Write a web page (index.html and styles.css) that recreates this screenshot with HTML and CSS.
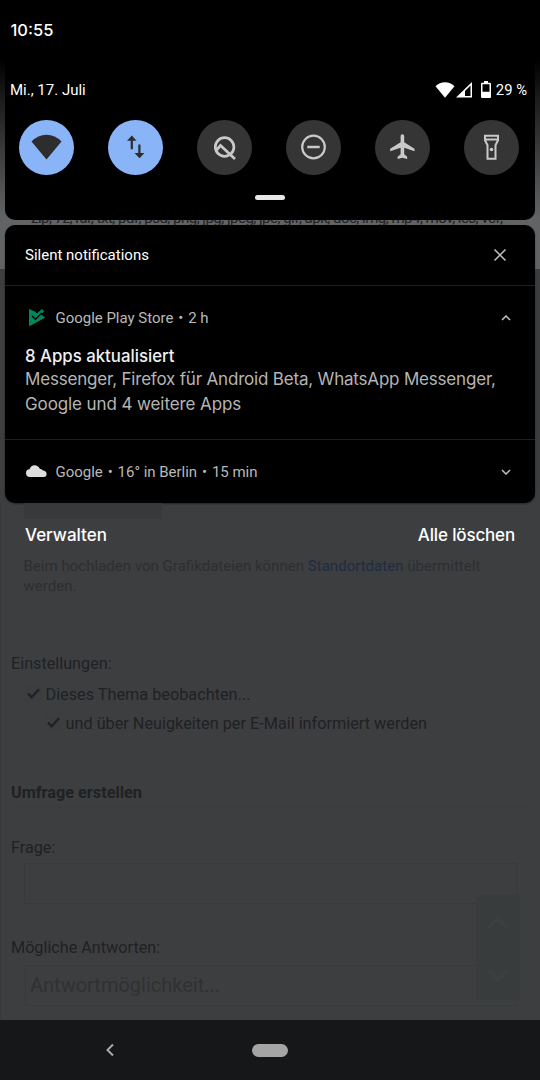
FILE: index.html
```html
<!DOCTYPE html>
<html lang="de">
<head>
<meta charset="utf-8">
<title>Benachrichtigungen</title>
<link rel="stylesheet" href="styles.css">
</head>
<body>
<div class="screen">
  <header class="quick-panel">
    <div class="clock"><span>10:55</span></div>
    <div class="status-row">
      <span class="date">Mi., 17. Juli</span>
      <div class="status-icons">
        <svg class="s-wifi" width="20" height="16" viewBox="0 0 20 16"><path d="M.5 4.300Q4.500.3 10 .3t9.500 4L10 15.700z" fill="#fff"/></svg>
        <svg class="s-cell" width="17" height="16" viewBox="0 0 17 16"><path fill-rule="evenodd" d="M16 0v15.500H0zM14.500 3.500L9 9v5h5.500z" fill="#fff"/></svg>
        <svg class="s-batt" width="10" height="17" viewBox="0 0 10 17"><path fill-rule="evenodd" d="M3 0h4v1.700h2q1 0 1 1V16q0 1-1 1H1q-1 0-1-1V2.700q0-1 1-1h2zM1.500 3.300v7.400h7V3.300z" fill="#fff"/></svg>
        <span class="percent">29 %</span>
      </div>
    </div>
    <div class="tiles">
      <div class="tile on"><svg viewBox="0 0 55 55"><path d="M12.500 21.500Q19 14.700 27.500 14.700T42.500 21.500L27.500 39.500z" fill="#2d2d2d"/></svg></div>
      <div class="tile on"><svg viewBox="0 0 55 55"><path d="M19 20.800l4.800-5.200 4.800 5.200h-3.700v8.500h-2.200v-8.500zM26.500 33h3.800v-8.500h2.200V33h3.900l-4.900 5.200z" fill="#2d2d2d"/></svg></div>
      <div class="tile"><svg viewBox="0 0 55 55" fill="none" stroke="#c9c9c9" stroke-width="2.700"><circle cx="27.600" cy="27" r="9.300"/><path d="M19.500 30l4-4.500L38 39"/></svg></div>
      <div class="tile"><svg viewBox="0 0 55 55" fill="none" stroke="#c9c9c9" stroke-width="2.200"><circle cx="27.500" cy="27" r="11.300"/><path d="M21.300 27h12.400" stroke-width="2.500"/></svg></div>
      <div class="tile"><svg viewBox="0 0 55 55"><path d="M39.500 31.200v-2.400L29.200 22.200V16q0-1.800-1.800-1.800T25.600 16v6.200L15.200 28.800v2.400l10.400-3.400v6.500l-3 2.500V39l4.800-1.300L32.200 39v-2.200l-3-2.500v-6.500z" fill="#c9c9c9"/></svg></div>
      <div class="tile"><svg viewBox="0 0 55 55" fill="none" stroke="#c9c9c9" stroke-width="2"><path d="M21 15.800h13v4.500l-2.500 5v13.500h-8V25.300l-2.500-5zM21 19.500h13"/><circle cx="27.500" cy="29.500" r="1.800" fill="#c9c9c9" stroke="none"/></svg></div>
    </div>
    <div class="handle"></div>
  </header>

  <div class="peek">zip, 7z, rar, txt, pdf, psd, png, jpg, jpeg, jpe, gif, apk, doc, img, mp4, mov, ics, vcf,</div>

  <main class="notifications">
    <div class="section-head">
      <span>Silent notifications</span>
      <svg width="14" height="14" viewBox="0 0 14 14"><path d="M1.500 1.500l11 11m0-11l-11 11" stroke="#bdc1c6" stroke-width="1.500"/></svg>
    </div>
    <article class="note expanded">
      <div class="note-head">
        <svg class="app-icon" width="22" height="20" viewBox="0 0 22 20"><path d="M4.500 1.500l6 3L12 6l5-4.500L18.700 3 15.500 6.500l4 3L4.500 17.700z" fill="#01875f" stroke="#01875f" stroke-width="1" stroke-linejoin="round"/><path d="M7 8l3.500 3.300L16.800 5" fill="none" stroke="#000" stroke-width="1.500"/></svg>
        <span class="source">Google Play Store<i>•</i>2 h</span>
        <svg class="chev" width="10" height="6" viewBox="0 0 10 6"><path d="M1 5l4-4 4 4" fill="none" stroke="#c4c4c4" stroke-width="1.500"/></svg>
      </div>
      <h2><span>8 Apps aktualisiert</span></h2>
      <p><span class="l1">Messenger, Firefox für Android Beta, WhatsApp Messenger,</span><br><span class="l2">Google und 4 weitere Apps</span></p>
    </article>
    <article class="note">
      <div class="note-head">
        <svg class="app-icon" width="22" height="20" viewBox="0 0 22 20"><path d="M5 15q-4-.2-4-4 0-3.500 3.500-3.800Q6 3.300 9.500 3.300T15 7q1.500-.2 2.600 1.200Q21.500 8.700 21.600 12T18 15z" fill="#dedede"/></svg>
        <span class="source">Google<i>•</i>16° in Berlin<i>•</i>15 min</span>
        <svg class="chev" width="10" height="6" viewBox="0 0 10 6"><path d="M1 1l4 4 4-4" fill="none" stroke="#c4c4c4" stroke-width="1.500"/></svg>
      </div>
    </article>
  </main>

  <section class="page">
    <div class="upload-box"></div>
    <div class="actions"><span class="manage">Verwalten</span><span class="clear">Alle löschen</span></div>
    <p class="hint">Beim hochladen von Grafikdateien können <a>Standortdaten</a> übermittelt<br>werden.</p>
    <div class="label settings">Einstellungen:</div>
    <div class="check"><svg width="17" height="17" viewBox="0 0 17 17"><path d="M3 8.500l3.600 3.700L14 4.300" fill="none" stroke="#202123" stroke-width="2.400"/></svg><span>Dieses Thema beobachten...</span></div>
    <div class="check nested"><svg width="17" height="17" viewBox="0 0 17 17"><path d="M3 8.500l3.600 3.700L14 4.300" fill="none" stroke="#202123" stroke-width="2.400"/></svg><span>und über Neuigkeiten per E-Mail informiert werden</span></div>
    <h3>Umfrage erstellen</h3>
    <div class="label question">Frage:</div>
    <div class="field"></div>
    <div class="label answers">Mögliche Antworten:</div>
    <div class="field answer">Antwortmöglichkeit...</div>
    <div class="scroller">
      <svg width="44" height="105" viewBox="0 0 44 105" fill="none" stroke="#3d3e40" stroke-width="4"><path d="M12.500 33L22 23.500 31.500 33M12.500 75l9.500 9.500 9.500-9.500"/></svg>
    </div>
  </section>

  <nav class="navbar">
    <svg width="8" height="14" viewBox="0 0 8 14"><path d="M7 1.500L1.500 7 7 12.500" fill="none" stroke="#a9a9a9" stroke-width="2"/></svg>
    <div class="home"></div>
    <div></div>
  </nav>
</div>
</body>
</html>
```
FILE: styles.css
```css
* { box-sizing: border-box; margin: 0; padding: 0; }
body { background: #000; font-family: Roboto, sans-serif; color: #fff; }
svg { display: block; flex: none; }
.screen {
  width: 540px; height: 1080px; overflow: hidden;
  display: flex; flex-direction: column;
  background: linear-gradient(#000 0, #000 60px, #1c1c1d 100px, #404142 160px, #626365 218px, #626365 269px, #3d3e40 269px);
}
.quick-panel { height: 220px; margin: 0 5px; background: #000; border-radius: 0 0 10px 10px; flex: none; }
.clock { height: 79px; padding: 18px 5px 0 5.500px; font: 500 16.500px/24px Inter, sans-serif; }
.status-row { display: flex; justify-content: space-between; height: 21px; padding: 0 8px 0 5px; align-items: center; font-size: 15px; }
.status-icons { display: flex; align-items: center; }
.s-cell { margin-left: 1px; }
.s-batt { margin-left: 8px; }
.percent { margin-left: 5px; font-size: 14.800px; }
.tiles { display: flex; justify-content: space-between; padding: 20px 16px 0 14px; }
.tile { width: 55px; height: 55px; border-radius: 50%; background: #353535; }
.tile.on { background: #8ab4f8; }
.handle { width: 30px; height: 5px; border-radius: 3px; background: #e8e8e8; margin: 20px auto 0; }
.peek { height: 5px; flex: none; overflow: hidden; padding-left: 31px; color: #202123; font-size: 15px; letter-spacing: -.5px; line-height: 14px; white-space: nowrap; display: flex; align-items: flex-end; }
.notifications { height: 278px; flex: none; margin: 0 5px; background: #000; border-radius: 10px; box-shadow: 0 1px 2px #0006; }
.section-head { height: 60px; display: flex; align-items: center; justify-content: space-between; padding: 0 28px 0 20px; font-size: 15px; }
.note { border-top: 1px solid #202020; height: 63px; }
.note.expanded { height: 154px; }
.note-head { height: 64px; display: flex; align-items: center; padding: 0 24px 0 20px; color: #b9b9b9; }
.source { margin-left: 8.500px; font-size: 15px; letter-spacing: -.02px; flex: 1; }
.source i { font-style: normal; margin: 0 4.900px; display: inline-block; }
.note h2 { font: 500 16.800px/24px Inter, sans-serif; padding-left: 20px; margin-top: -6px; color: #f1f1f1; }
.note p { font: 400 17px/25px Inter, sans-serif; padding-left: 20px; margin-top: -1px; color: #b5b5b5; white-space: nowrap; }
.l1 { letter-spacing: -.19px; }
.l2 { letter-spacing: -.1px; }
.page { position: relative; height: 517px; flex: none; color: #202123; border-left: 1px solid #38393b; }
.upload-box { width: 138px; height: 16px; margin-left: 23px; background: #38393b; }
.actions { height: 31px; display: flex; align-items: center; justify-content: space-between; padding: 0 25px 0 24px; color: #fff; font: 500 17px/24px Inter, sans-serif; }
.clear { letter-spacing: -.16px; }
.hint { margin-left: 22.500px; padding-top: 6px; font-size: 15.050px; line-height: 20px; color: #2d2e30; white-space: nowrap; }
.hint a { color: #1d2c42; }
.label { font-size: 16.200px; line-height: 20px; margin-left: 10px; }
.settings { margin-top: 58px; }
.check { display: flex; align-items: center; height: 29px; margin-left: 24px; font-size: 16.260px; }
.check svg { margin-top: -3px; border-radius: 1px; background: #3c3d3f; }
.check span { margin-left: 3.500px; }
.settings + .check { margin-top: 6px; }
.nested { margin-left: 44px; }
.page h3 { margin: 45px 10px 0; font-size: 16.260px; line-height: 20px; font-weight: 700; height: 24px; border-bottom: 1px solid #3a3b3d; }
.question { margin-top: 31px; }
.field { height: 41px; width: 493px; margin: 5px 0 0 23px; border: 1px solid #38393b; }
.answers { margin-top: 34px; }
.field.answer { margin-top: 7px; margin-left: 24px; width: 492px; padding-left: 4px; font-size: 20px; line-height: 39px; color: #303133; }
.scroller { position: absolute; left: 475px; top: 392px; width: 44px; height: 105px; background: #383c3d; }
.navbar { height: 60px; flex: none; background: #161719; display: grid; grid-template-columns: 252px 36px 252px; align-items: center; }
.navbar svg { margin-left: 106px; }
.home { width: 36px; height: 13px; border-radius: 7px; background: #a5a5a5; }
```
